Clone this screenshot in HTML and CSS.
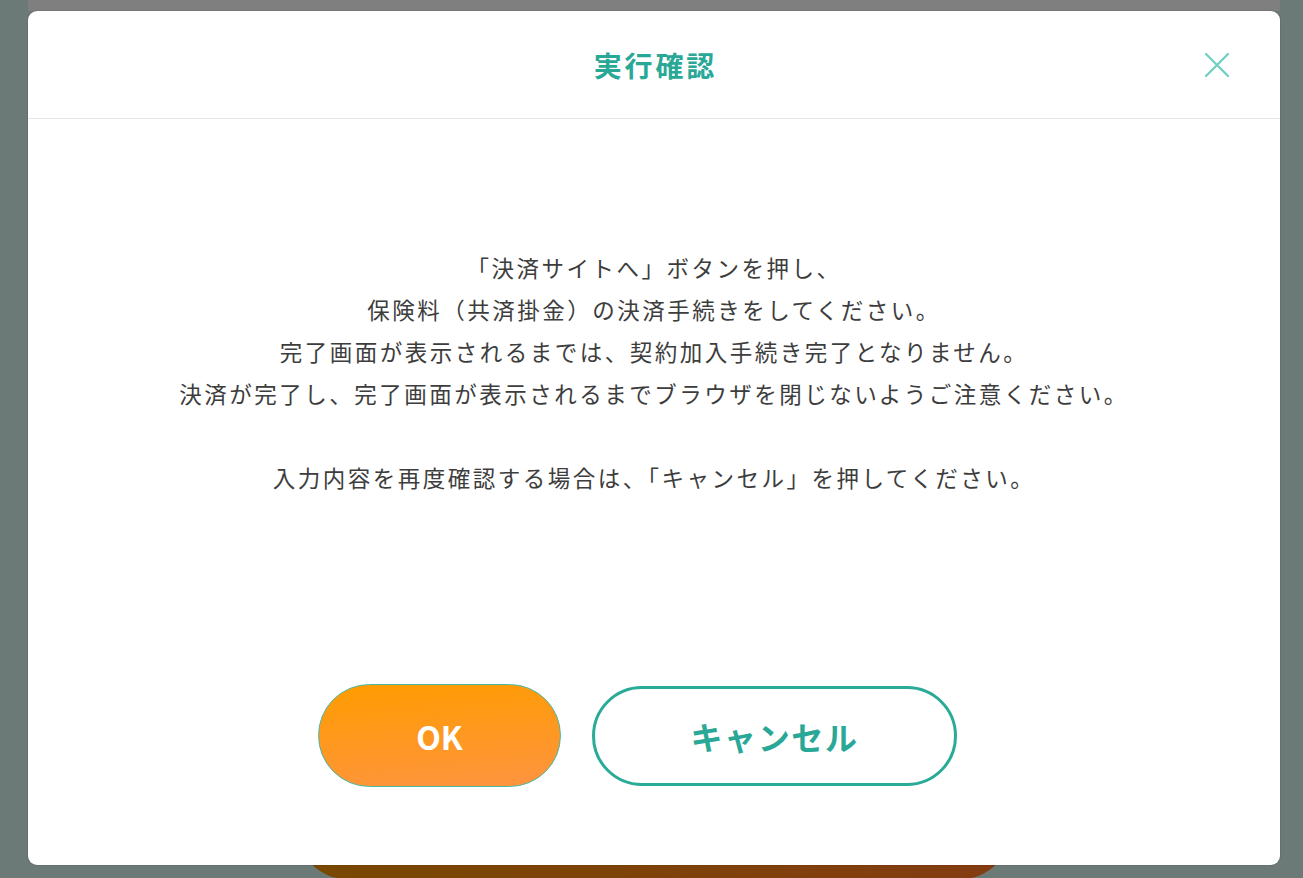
FILE: index.html
```html
<!DOCTYPE html>
<html lang="ja">
<head>
<meta charset="utf-8">
<title>実行確認</title>
<link rel="stylesheet" href="styles.css">
</head>
<body>
<div class="page">
  <div class="top-strip"></div>
  <div class="modal">
    <div class="modal-header">
      <h1 class="modal-title">実行確認</h1>
      <button class="close" aria-label="閉じる">
        <svg width="24" height="24" viewBox="0 0 24 24"><path d="M1 1 L23 23 M23 1 L1 23" stroke="#6ccfbf" stroke-width="2.2" stroke-linecap="round" fill="none"/></svg>
      </button>
    </div>
    <div class="modal-body">
      <p class="message">「決済サイトへ」ボタンを押し、<br>保険料（共済掛金）の決済手続きをしてください。<br>完了画面が表示されるまでは、契約加入手続き完了となりません。<br>決済が完了し、完了画面が表示されるまでブラウザを閉じないようご注意ください。<br><br>入力内容を再度確認する場合は、「キャンセル」を押してください。</p>
      <div class="actions">
        <button class="btn btn-ok">OK</button>
        <button class="btn btn-cancel">キャンセル</button>
      </div>
    </div>
  </div>
  <div class="behind"></div>
</div>
</body>
</html>
```

FILE: styles.css
```css
html, body {
  margin: 0;
  padding: 0;
}
body {
  background: #6b7a76;
  font-family: "Noto Sans CJK JP", "Noto Sans", sans-serif;
}
.page {
  width: 1303px;
  height: 878px;
  overflow: hidden;
  display: flex;
  flex-direction: column;
}
.top-strip {
  width: 1252px;
  height: 11px;
  margin-left: 28px;
  background: #7f7f7f;
  flex: none;
}
.modal {
  position: relative;
  z-index: 1;
  width: 1252px;
  height: 854px;
  margin-left: 28px;
  background: #fff;
  border-radius: 9px;
  box-shadow: 0 0 1.5px rgba(0, 0, 0, 0.35);
  display: flex;
  flex-direction: column;
  flex: none;
}
.modal-header {
  height: 107px;
  border-bottom: 1px solid #e6e6e6;
  display: flex;
  align-items: center;
  justify-content: center;
  position: relative;
}
.modal-title {
  margin: 0;
  font-size: 28px;
  font-weight: 700;
  letter-spacing: 0.1em;
  color: #2aa897;
  line-height: 1;
  padding-left: 0.1em;
}
.close {
  position: absolute;
  right: 51px;
  top: 42px;
  width: 24px;
  height: 24px;
  padding: 0;
  border: 0;
  background: none;
  display: block;
}
.close svg {
  display: block;
}
.modal-body {
  display: flex;
  flex-direction: column;
  align-items: center;
  padding-top: 127px;
}
.message {
  margin: 0;
  text-align: center;
  font-size: 22.5px;
  line-height: 42px;
  letter-spacing: 2.5px;
  color: #3d3d3d;
}
.actions {
  margin-top: 186px;
  display: flex;
  align-items: center;
  gap: 31px;
  padding-right: 33px;
}
.btn {
  font-family: "Noto Sans CJK JP", "Noto Sans", sans-serif;
  font-weight: 700;
  border-radius: 60px;
  cursor: pointer;
  padding: 0;
}
.btn-ok {
  width: 243px;
  height: 103px;
  border: 1px solid #48b8a3;
  background: linear-gradient(175deg, #ff9c00 0%, #fe9440 100%);
  color: #fff;
  font-size: 32px;
}
.btn-cancel {
  width: 365px;
  height: 100px;
  border: 3px solid #2aab98;
  background: #fff;
  color: #2aa897;
  font-size: 32px;
  letter-spacing: 0.05em;
}
.behind {
  width: 714px;
  height: 50px;
  margin: -36px 0 0 297px;
  border-radius: 0 0 50px 50px;
  background: linear-gradient(90deg, #784800 0%, #843c12 100%);
  flex: none;
}
```
